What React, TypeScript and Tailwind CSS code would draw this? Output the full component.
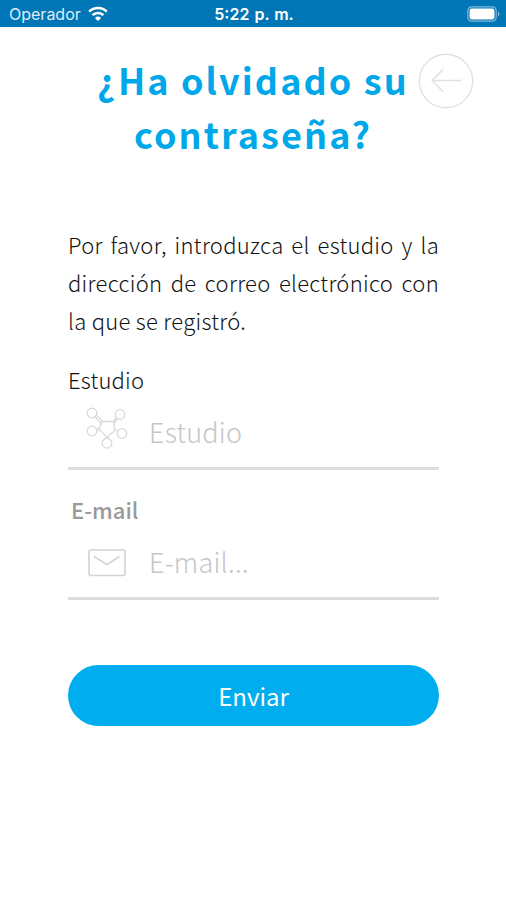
import { useState } from "react";
import type { ReactNode } from "react";

const StatusBar = () => {
  return (
    <div className="grid h-[27px] grid-cols-3 items-center bg-[#0076b6] px-2 font-['Inter','Liberation_Sans',sans-serif] text-white">
      <div className="flex items-center gap-[7px] pl-px text-[16px] leading-[26px]">
        <span className="pt-px text-[#dcecf6]">Operador</span>
        <svg width="20" height="16" viewBox="0 0 20 16" fill="none">
          <path d="M1.2 5.6a12.6 12.6 0 0 1 17.6 0" stroke="white" strokeWidth="2.7" />
          <path d="M4.5 9.2a8 8 0 0 1 11 0" stroke="white" strokeWidth="2.5" />
          <path d="M6.9 11.9a4.5 4.5 0 0 1 6.2 0L10 15z" fill="white" />
        </svg>
      </div>
      <span className="pt-px pl-[2px] text-center text-[16px] leading-[26px] font-semibold whitespace-nowrap [word-spacing:1px]">
        5:22 p. m.
      </span>
      <div className="-mr-0.5 flex justify-end">
        <svg width="33" height="16" viewBox="0 0 33 16" fill="none">
          <rect x="0.8" y="0.8" width="28.4" height="14.4" rx="4" stroke="#7fbadb" strokeWidth="1.2" />
          <rect x="2.5" y="2.5" width="25" height="11" rx="2.4" fill="white" />
          <path d="M31 5.5c1.8.8 1.8 4.2 0 5z" fill="#7fbadb" />
        </svg>
      </div>
    </div>
  );
};

const StudioIcon = () => {
  return (
    <svg
      className="mt-[9px]"
      width="42"
      height="42"
      viewBox="0 0 42 42"
      fill="none"
      stroke="#dadada"
      strokeWidth="1.3"
    >
      <path d="M16 14.5h11.5l1.5 9-8 6.5-8-8z" />
      <path d="M9 9.8l6.5 7M10.3 8l6.5 6.5M30.3 10.7l-2.8 3.8M31.3 11.5l-3 5M29.2 22.5l3 1.7M13 20.5l-3.4 1.8M14 23l-3.4 1M20 29l-1 3M22 29l1 3" />
      <circle cx="6" cy="6" r="4.8" />
      <circle cx="34" cy="7.5" r="4.8" />
      <circle cx="6" cy="24" r="4.8" />
      <circle cx="36" cy="26.5" r="4.8" />
      <circle cx="21" cy="36.2" r="4.8" />
    </svg>
  );
};

const MailIcon = () => {
  return (
    <svg
      className="mt-[21px]"
      width="38"
      height="28"
      viewBox="0 0 38 28"
      fill="none"
      stroke="#d3d3d3"
      strokeWidth="1.6"
    >
      <rect x="1" y="1" width="36" height="25.5" rx="2" />
      <path d="M6 7.5l13 8 12.5-8" />
    </svg>
  );
};

type FieldProps = {
  name: string;
  placeholder: string;
  icon: ReactNode;
  value: string;
  onChange: (value: string) => void;
};

const Field = ({ name, placeholder, icon, value, onChange }: FieldProps) => {
  return (
    <div className="flex h-[74px] border-b-[3px] border-[#dcdcdc]">
      <div className="flex w-[81px] shrink-0 justify-center pt-0.5 pr-1">{icon}</div>
      <input
        id={name}
        name={name}
        type="text"
        placeholder={placeholder}
        value={value}
        onChange={(e) => onChange(e.target.value)}
        className="h-[70px] w-full min-w-0 bg-transparent text-[27px] font-light tracking-[0.2px] text-[#555] outline-none placeholder:text-[#c6c6c6]"
      />
    </div>
  );
};

const App = () => {
  const [studio, setStudio] = useState("");
  const [email, setEmail] = useState("");

  return (
    <div className="relative min-h-screen w-full bg-white font-['Noto_Sans_CJK_SC',sans-serif]">
      <StatusBar />
      <button aria-label="Volver" className="absolute top-[53px] right-[32px]">
        <svg width="56" height="56" viewBox="0 0 56 56" fill="none" stroke="#e0e0e0" strokeWidth="1.4">
          <circle cx="28" cy="28" r="26.7" />
          <path d="M43 27.5H15M25 16.5l-11 11 11 11" />
        </svg>
      </button>
      <h1 className="mt-[25px] text-center text-[36px] leading-[54px] font-bold tracking-[2.1px] text-[#00a7e9]">
        ¿Ha olvidado su
        <br />
        contraseña?
      </h1>
      <form className="mt-[65px] flex flex-col px-[68px] pr-[67px]" onSubmit={(e) => e.preventDefault()}>
        <p className="text-justify text-[22px] leading-[38px] font-light tracking-[0.3px] text-[#111]">
          Por favor, introduzca el estudio y la dirección de correo electrónico con la que se registró.
        </p>
        <label htmlFor="studio" className="mt-[23px] text-[22px] leading-[34px] font-light tracking-[0.2px] text-[#111]">
          Estudio
        </label>
        <Field name="studio" placeholder="Estudio" icon={<StudioIcon />} value={studio} onChange={setStudio} />
        <label htmlFor="email" className="mt-[22px] pl-[3px] text-[22px] leading-[34px] font-medium text-[#999]">
          E-mail
        </label>
        <Field name="email" placeholder="E-mail..." icon={<MailIcon />} value={email} onChange={setEmail} />
        <button className="mt-[65px] h-[61px] rounded-full bg-[#00adee] text-[24px] text-white">
          Enviar
        </button>
      </form>
    </div>
  );
};

export default App;
